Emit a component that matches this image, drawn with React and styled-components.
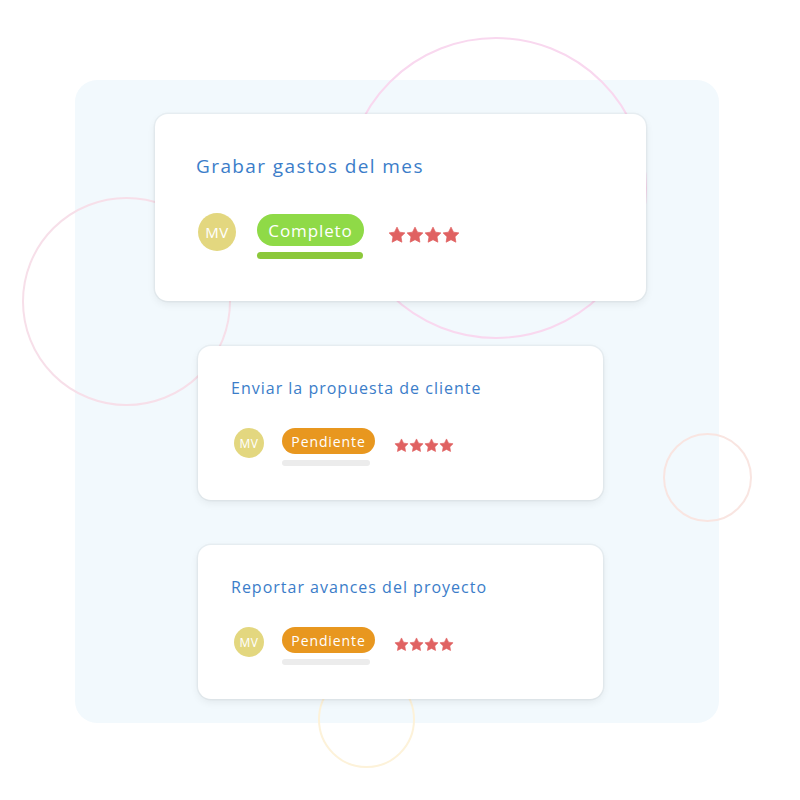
import React from 'react';
import styled, { createGlobalStyle, css } from 'styled-components';

const GlobalStyle = createGlobalStyle`
  * {
    box-sizing: border-box;
  }

  body {
    margin: 0;
    background: #ffffff;
    font-family: 'Open Sans', 'Liberation Sans', sans-serif;
  }
`;

const tasks = [
  { id: 1, title: 'Grabar gastos del mes', status: 'done', label: 'Completo', size: 'lg' },
  { id: 2, title: 'Enviar la propuesta de cliente', status: 'pending', label: 'Pendiente', size: 'sm' },
  { id: 3, title: 'Reportar avances del proyecto', status: 'pending', label: 'Pendiente', size: 'sm' },
];

// decoraciones de fondo
const rings = [
  { id: 'top', left: 345, top: 37, size: 302, color: '#f9d8ef' },
  { id: 'left', left: 22, top: 197, size: 209, color: '#f7dfe9' },
  { id: 'right', left: 663, top: 433, size: 89, color: '#f9e5e1' },
  { id: 'bottom', left: 318, top: 671, size: 97, color: '#fdf2d9' },
];

const StarIcon = ({ size }) => (
  <svg width={size} height={size} viewBox="0 0 24 24">
    <polygon
      points="12,1.5 15.3,8.2 22.5,9.2 17.3,14.3 18.5,21.6 12,18.2 5.5,21.6 6.7,14.3 1.5,9.2 8.7,8.2"
      fill="#e06262"
      stroke="#e06262"
      strokeWidth="1"
      strokeLinejoin="round"
    />
  </svg>
);

const TaskCard = ({ task }) => {
  const large = task.size === 'lg';

  return (
    <StCard size={task.size}>
      <StTitle size={task.size}>{task.title}</StTitle>
      <StRow size={task.size}>
        <StAvatar size={task.size}>MV</StAvatar>
        <StStatusCol>
          <StBadge size={task.size} status={task.status}>
            {task.label}
          </StBadge>
          <StBar size={task.size} status={task.status} />
        </StStatusCol>
        <StStars size={task.size}>
          {[0, 1, 2, 3].map((i) => (
            <StarIcon key={i} size={large ? 18 : 15} />
          ))}
        </StStars>
      </StRow>
    </StCard>
  );
};

const App = () => {
  return (
    <StPage>
      <GlobalStyle />
      {rings.map((ring) => (
        <StRing
          key={ring.id}
          color={ring.color}
          style={{ left: ring.left, top: ring.top, width: ring.size, height: ring.size }}
        />
      ))}
      <StPanel>
        {tasks.map((task) => (
          <TaskCard key={task.id} task={task} />
        ))}
      </StPanel>
    </StPage>
  );
};

export default App;

const StPage = styled.div`
  position: relative;
  width: 800px;
  height: 800px;
  padding: 80px 0 0 75px;
  overflow: hidden;
  background: #ffffff;
`;

const StRing = styled.div`
  position: absolute;
  border: 2px solid ${({ color }) => color};
  border-radius: 50%;
`;

const StPanel = styled.div`
  display: flex;
  flex-direction: column;
  align-items: center;
  gap: 45px;

  width: 644px;
  height: 643px;
  padding: 34px 0 0 7px;
  background: #f2f9fd;
  border-radius: 22px;
`;

const StCard = styled.div`
  position: relative;
  z-index: 1;
  display: flex;
  flex-direction: column;

  background: #ffffff;
  border-radius: 13px;
  box-shadow: 0 0 0 1.5px rgba(0, 0, 0, 0.035), 0 3px 8px rgba(0, 0, 0, 0.07);

  ${({ size }) =>
    size === 'lg'
      ? css`
          width: 491px;
          height: 187px;
          padding: 40px 0 0 41px;
        `
      : css`
          width: 405px;
          height: 154px;
          padding: 32px 0 0 33px;
        `}
`;

const StTitle = styled.div`
  color: #3b7dc9;
  font-weight: 400;
  white-space: nowrap;

  ${({ size }) =>
    size === 'lg'
      ? css`
          font-size: 19px;
          line-height: 24px;
          letter-spacing: 1.4px;
        `
      : css`
          font-size: 16px;
          line-height: 20px;
          letter-spacing: 1px;
        `}
`;

const StRow = styled.div`
  display: flex;
  align-items: flex-start;
  margin-top: ${({ size }) => (size === 'lg' ? '36px' : '30px')};
`;

const StAvatar = styled.div`
  display: flex;
  justify-content: center;
  align-items: center;
  flex-shrink: 0;

  border-radius: 50%;
  background: #e3d77f;
  color: #ffffff;
  letter-spacing: 0.5px;

  ${({ size }) =>
    size === 'lg'
      ? css`
          width: 38px;
          height: 38px;
          margin: -1px 21px 0 2px;
          font-size: 15px;
        `
      : css`
          width: 30px;
          height: 30px;
          margin: 0 18px 0 3px;
          font-size: 12px;
        `}
`;

const StStatusCol = styled.div`
  display: flex;
  flex-direction: column;
  align-items: flex-start;
  gap: 6px;
`;

const StBadge = styled.div`
  display: flex;
  justify-content: center;
  align-items: center;

  border-radius: 999px;
  color: #ffffff;
  font-weight: 500;
  letter-spacing: 0.9px;
  background: ${({ status }) => (status === 'done' ? '#8fda47' : '#e8971f')};

  ${({ size }) =>
    size === 'lg'
      ? css`
          width: 107px;
          height: 32px;
          font-size: 17px;
        `
      : css`
          width: 93px;
          height: 26px;
          font-size: 14px;
        `}
`;

const StBar = styled.div`
  border-radius: 4px;
  background: ${({ status }) => (status === 'done' ? '#8cc83b' : '#ececec')};

  ${({ size }) =>
    size === 'lg'
      ? css`
          width: 106px;
          height: 7px;
        `
      : css`
          width: 88px;
          height: 6px;
        `}
`;

const StStars = styled.div`
  display: flex;

  ${({ size }) =>
    size === 'lg'
      ? css`
          margin: 12px 0 0 24px;
        `
      : css`
          margin: 10px 0 0 19px;
        `}
`;
